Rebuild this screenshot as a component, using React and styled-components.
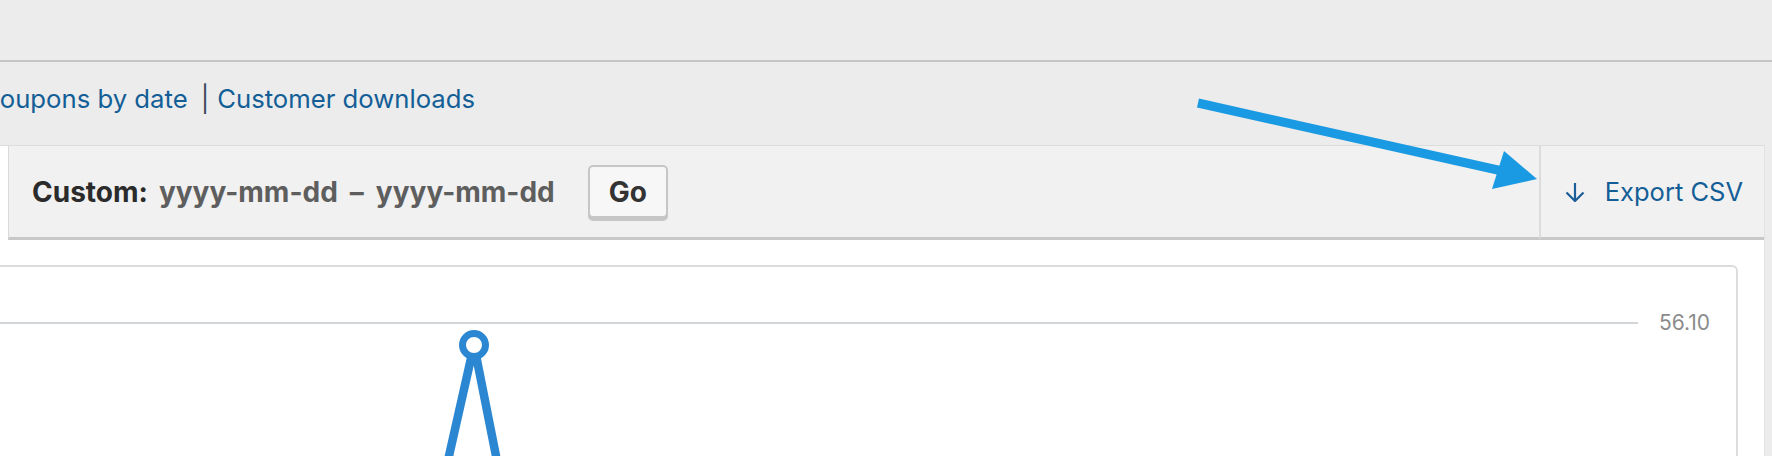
import React from 'react';
import styled, { createGlobalStyle } from 'styled-components';

const GlobalStyle = createGlobalStyle`
  html, body {
    margin: 0;
    padding: 0;
  }
  body {
    background: #ececec;
    font-family: Inter, Roboto, "Liberation Sans", Arial, sans-serif;
    overflow: hidden;
  }
`;

const Page = styled.div`
  position: relative;
  width: 1772px;
  height: 456px;
  overflow: hidden;
`;

const TopBar = styled.div`
  height: 60px;
  border-bottom: 2px solid #c4c4c4;
`;

const SubNav = styled.div`
  margin-left: -19px;
  padding: 19px 0 28px;
  font-size: 25.7px;
  line-height: 36px;
  white-space: nowrap;
`;

const NavLink = styled.a`
  color: #135e96;
  text-decoration: none;
`;

const NavSep = styled.span`
  color: #3a4b5c;
  padding: 0 8px 0 13px;
`;

const Postbox = styled.div`
  margin-left: -40px;
  width: 1804px;
  height: 320px;
  background: #fff;
  border-top: 1px solid #dcdcdc;
  border-right: 1px solid #e2e2e2;
`;

const StatsHeader = styled.div`
  display: flex;
  height: 94px;
`;

const Lead = styled.div`
  width: 48px;
  background: #fff;
`;

const Range = styled.div`
  flex: 1;
  display: flex;
  align-items: center;
  padding-left: 23px;
  background: #f1f1f1;
  border-left: 1px solid #dadada;
  border-bottom: 3px solid #c8c8c8;
  font-size: 28px;
  line-height: 36px;
  font-weight: 700;
`;

const RangeLabel = styled.span`
  color: #2b2b2b;
  margin-right: 11px;
`;

const DateText = styled.span`
  color: #5e5e5e;
`;

const Dash = styled.span`
  color: #5e5e5e;
  padding: 0 12px;
`;

const GoButton = styled.button`
  margin-left: 33px;
  height: 53px;
  padding: 0 19px;
  background: #f7f7f7;
  border: 2px solid #c6c6c6;
  border-radius: 5px;
  box-shadow: 0 3px 0 #c6c6c6;
  font-family: inherit;
  font-size: 28px;
  font-weight: 700;
  color: #333;
`;

const Export = styled.a`
  display: flex;
  align-items: center;
  gap: 20px;
  padding: 0 21px 0 24px;
  background: #f1f1f1;
  border-left: 2px solid #dcdcdc;
  border-bottom: 3px solid #c8c8c8;
  color: #135e96;
  font-size: 25.5px;
  text-decoration: none;
`;

const ChartArea = styled.div`
  padding: 25px 26px 0 20px;
`;

const ChartCard = styled.div`
  position: relative;
  height: 300px;
  background: #fff;
  border: 2px solid #dcdcdc;
  border-radius: 6px;
`;

const AxisRow = styled.div`
  display: flex;
  align-items: center;
  gap: 21px;
  margin-top: 44px;
  padding-right: 26px;
`;

const GridLine = styled.div`
  flex: 1;
  height: 2px;
  background: #d3d6d9;
`;

const AxisLabel = styled.span`
  font-size: 21px;
  line-height: 24px;
  color: #8b8b8b;
`;

const Series = styled.svg`
  position: absolute;
  left: 0;
  top: 0;
  overflow: visible;
`;

const Callout = styled.svg`
  position: absolute;
  left: 0;
  top: 0;
  pointer-events: none;
`;

const DownArrow = () => (
  <svg width="20" height="20" viewBox="0 0 20 20" fill="none" stroke="#1e5d96" strokeWidth="2.2">
    <path d="M10 1 V19" />
    <path d="M1.5 10.5 L10 19 L18.5 10.5" />
  </svg>
);

export default function App() {
  return (
    <Page>
      <GlobalStyle />
      <TopBar />
      <SubNav>
        <NavLink href="#">Coupons by date</NavLink>
        <NavSep>|</NavSep>
        <NavLink href="#">Customer downloads</NavLink>
      </SubNav>
      <Postbox>
        <StatsHeader>
          <Lead />
          <Range>
            <RangeLabel>Custom:</RangeLabel>
            <DateText>yyyy-mm-dd</DateText>
            <Dash>–</Dash>
            <DateText>yyyy-mm-dd</DateText>
            <GoButton type="button">Go</GoButton>
          </Range>
          <Export href="#">
            <DownArrow />
            Export CSV
          </Export>
        </StatsHeader>
        <ChartArea>
          <ChartCard>
            <AxisRow>
              <GridLine />
              <AxisLabel>56.10</AxisLabel>
            </AxisRow>
            <Series width="600" height="200">
              <polyline
                points="464.5,200 492,78 516.2,200"
                fill="none"
                stroke="#2c87d3"
                strokeWidth="8.5"
                strokeLinejoin="miter"
              />
              <circle cx="492" cy="78" r="11.5" fill="#fff" stroke="#2c87d3" strokeWidth="7" />
            </Series>
          </ChartCard>
        </ChartArea>
      </Postbox>
      <Callout width="1772" height="456">
        <line x1="1198" y1="103" x2="1500" y2="170.5" stroke="#1a9ae3" strokeWidth="9" />
        <polygon points="1504,151 1537,179 1492,189" fill="#1a9ae3" />
      </Callout>
    </Page>
  );
}
